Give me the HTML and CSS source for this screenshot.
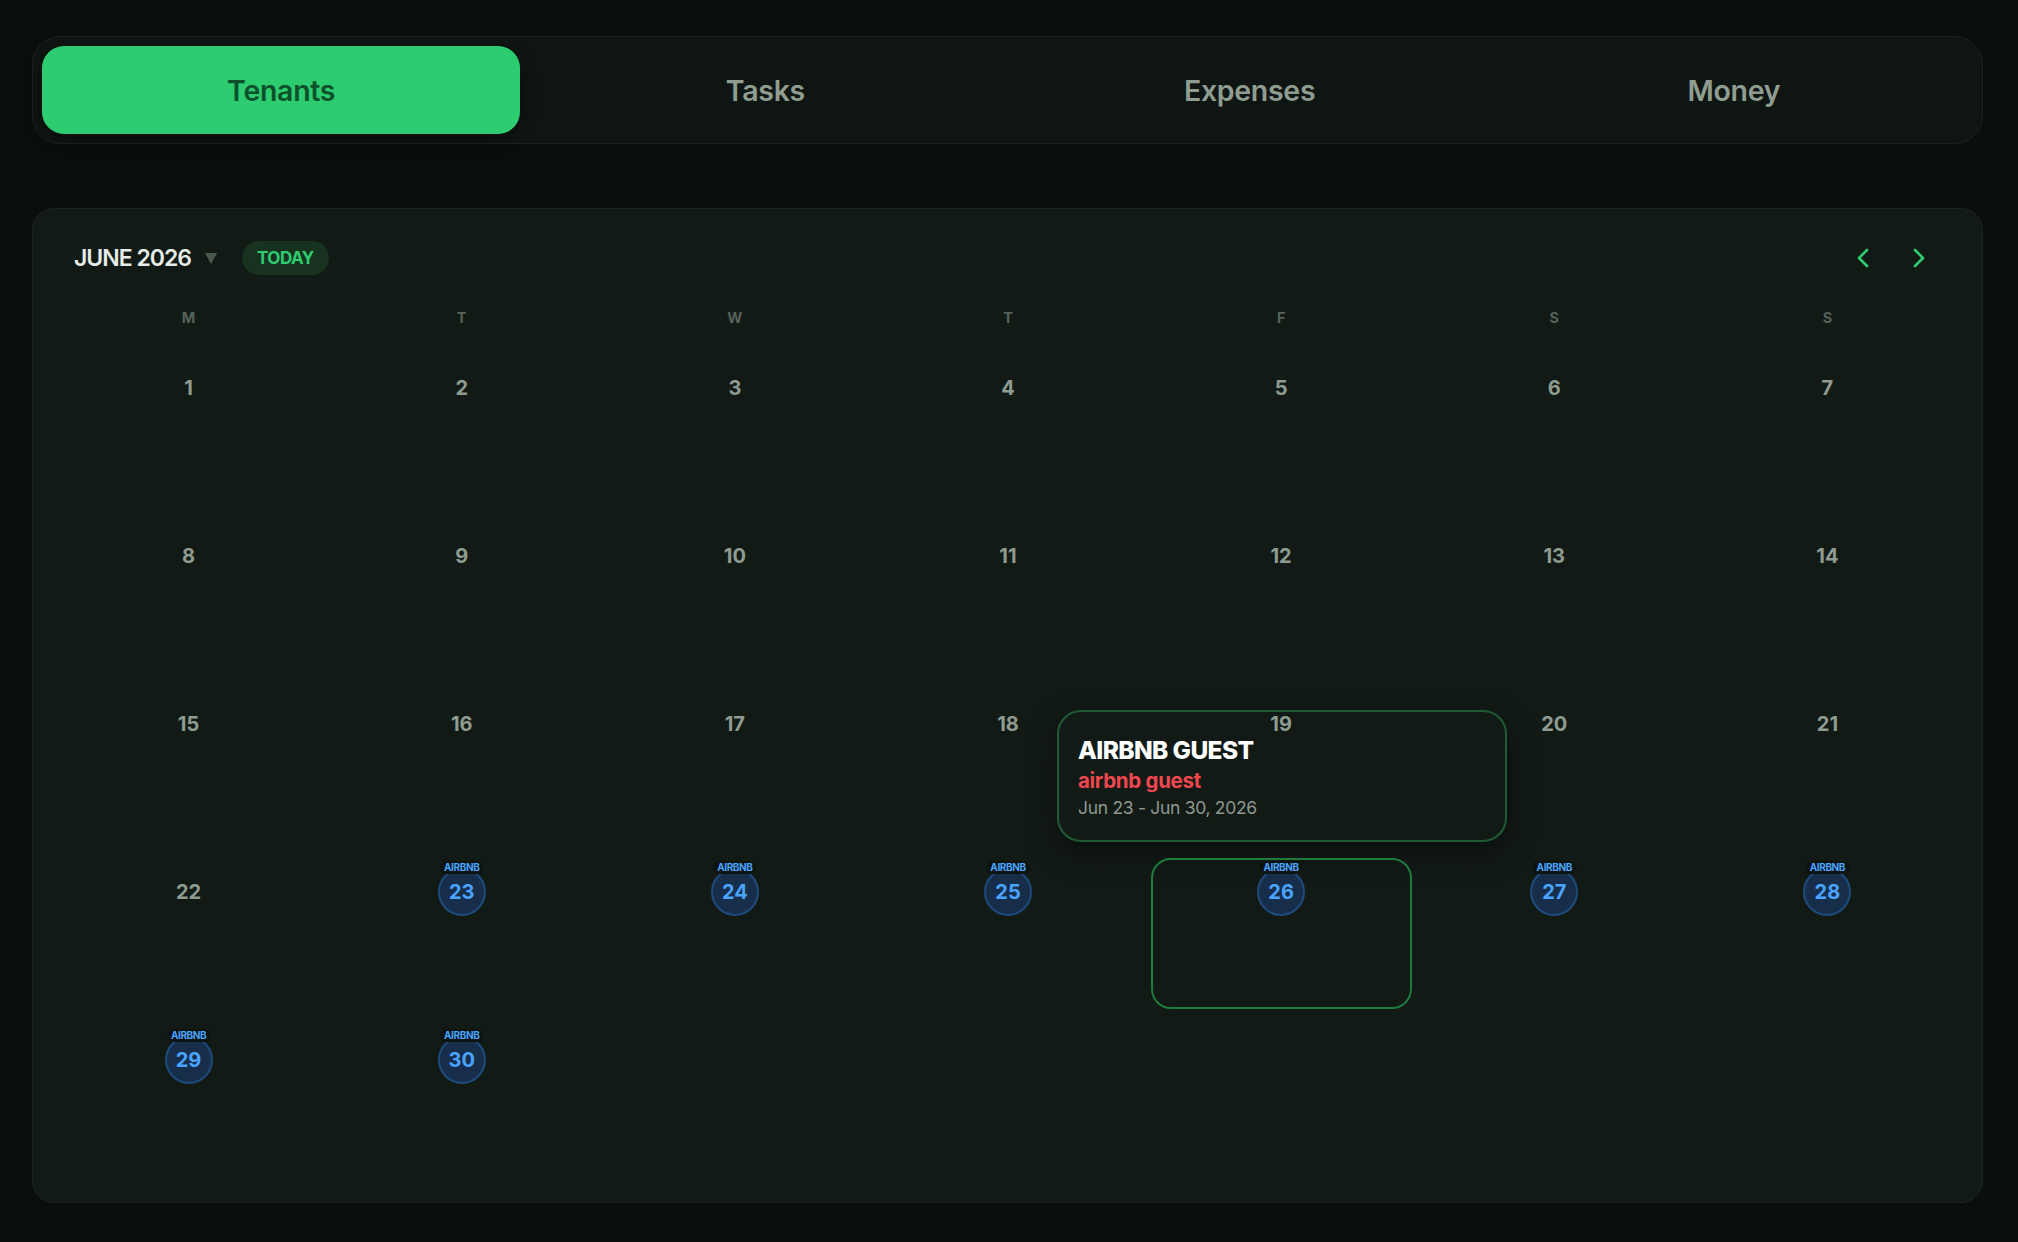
FILE: index.html
```html
<!DOCTYPE html>
<html lang="en">
<head>
  <meta charset="UTF-8" />
  <title>Rental Calendar</title>
  <link rel="stylesheet" href="styles.css">
</head>
<body>
  <nav class="tabs">
    <button class="tab active">Tenants</button>
    <button class="tab">Tasks</button>
    <button class="tab">Expenses</button>
    <button class="tab">Money</button>
  </nav>

  <section class="calendar">
    <div class="cal-head">
      <div class="month">
        <span class="month-name">JUNE 2026</span>
        <span class="caret"></span>
        <button class="today">TODAY</button>
      </div>
      <div class="nav-arrows">
        <button class="arrow">
          <svg width="14" height="22" viewBox="0 0 14 22"><path d="M11 3 L3 11 L11 19" fill="none" stroke="#2ecc71" stroke-width="2.6" stroke-linecap="round" stroke-linejoin="round"/></svg>
        </button>
        <button class="arrow">
          <svg width="14" height="22" viewBox="0 0 14 22"><path d="M3 3 L11 11 L3 19" fill="none" stroke="#2ecc71" stroke-width="2.6" stroke-linecap="round" stroke-linejoin="round"/></svg>
        </button>
      </div>
    </div>

    <div class="weekdays">
      <span>M</span><span>T</span><span>W</span><span>T</span><span>F</span><span>S</span><span>S</span>
    </div>

    <div class="days" id="days"></div>

    <div class="tooltip">
      <div class="tip-title">AIRBNB GUEST</div>
      <div class="tip-name">airbnb guest</div>
      <div class="tip-dates">Jun 23 - Jun 30, 2026</div>
    </div>
  </section>

  <script>
    const booked = [23, 24, 25, 26, 27, 28, 29, 30];
    const selected = 26;
    const days = document.getElementById("days");

    for (let d = 1; d <= 35; d++) {
      const cell = document.createElement("div");
      cell.className = "day";
      if (d === selected) cell.classList.add("selected");

      if (d <= 30) {
        const num = document.createElement("div");
        num.className = "num";
        num.textContent = d;
        if (booked.includes(d)) {
          num.classList.add("booked");
          const tag = document.createElement("span");
          tag.className = "tag";
          tag.textContent = "AIRBNB";
          num.appendChild(tag);
        }
        cell.appendChild(num);
      }
      days.appendChild(cell);
    }
  </script>
</body>
</html>
```

FILE: styles.css
```css
body {
  margin: 0;
  padding: 36px 35px 40px 32px;
  background: #0a0f0c;
  font-family: Inter, 'Noto Sans', sans-serif;
  color: #8e9b90;
}
button {
  font-family: inherit;
  border: none;
  background: none;
  cursor: pointer;
}

.tabs {
  display: grid;
  grid-template-columns: repeat(4, 1fr);
  gap: 6px;
  padding: 9px;
  background: #0f1512;
  border: 1px solid #1b221e;
  border-radius: 28px;
}
.tab {
  height: 88px;
  font-size: 28.5px;
  font-weight: 600;
  letter-spacing: -0.3px;
  color: #8f9d91;
  border-radius: 22px;
}
.tab.active {
  background: #2ecc71;
  color: #0c5129;
  box-shadow: 0 6px 18px rgba(0,0,0,0.35);
}

.calendar {
  position: relative;
  margin-top: 64px;
  padding: 32px 24px 25px 25px;
  background: #121a16;
  border: 1px solid #1c2420;
  border-radius: 22px;
}
.cal-head {
  display: flex;
  align-items: center;
  justify-content: space-between;
  padding: 0 28px 0 16px;
  height: 34px;
}
.month {
  display: flex;
  align-items: center;
}
.month-name {
  font-size: 23px;
  font-weight: 600;
  letter-spacing: -1px;
  color: #e6ece7;
}
.caret {
  width: 0;
  height: 0;
  margin-left: 14px;
  border-left: 6px solid transparent;
  border-right: 6px solid transparent;
  border-top: 11px solid #4b5a4f;
}
.today {
  margin-left: 25px;
  height: 34px;
  padding: 0 15px;
  border-radius: 17px;
  background: #17321f;
  color: #2ecc71;
  font-size: 17px;
  font-weight: 700;
  letter-spacing: -0.5px;
}
.nav-arrows {
  display: flex;
  gap: 34px;
}
.arrow {
  padding: 0;
  width: 22px;
  height: 22px;
  display: flex;
  align-items: center;
  justify-content: center;
}

.weekdays {
  display: grid;
  grid-template-columns: repeat(7, 1fr);
  column-gap: 12px;
  margin-top: 33px;
  height: 20px;
  line-height: 20px;
  text-align: center;
  font-size: 14.5px;
  font-weight: 700;
  color: #56625a;
}

.days {
  display: grid;
  grid-template-columns: repeat(7, 1fr);
  column-gap: 12px;
  row-gap: 17px;
  margin-top: 26px;
}
.day {
  position: relative;
  z-index: 2;
  height: 151px;
  box-sizing: border-box;
  border: 2px solid transparent;
  border-radius: 20px;
  display: flex;
  justify-content: center;
}
.day.selected {
  border-color: #1f7a3e;
}
.num {
  position: relative;
  margin-top: 8px;
  width: 48px;
  height: 48px;
  line-height: 48px;
  text-align: center;
  font-size: 20px;
  font-weight: 700;
  color: #8e9b90;
}
.num.booked {
  box-sizing: border-box;
  line-height: 44px;
  border: 2px solid #1e4a7c;
  border-radius: 50%;
  background: #172e4a;
  color: #4aa3ff;
}
.tag {
  position: absolute;
  left: 50%;
  top: -9px;
  transform: translateX(-50%);
  padding: 1px 4px;
  border-radius: 6px;
  background: #0d1410;
  color: #4aa3ff;
  font-size: 10px;
  line-height: 11px;
  font-weight: 700;
  letter-spacing: -0.4px;
}

.tooltip {
  position: absolute;
  z-index: 1;
  left: 1024px;
  top: 501px;
  width: 450px;
  height: 132px;
  box-sizing: border-box;
  padding: 23px 18px 0 19px;
  background: #121a16;
  border: 2px solid #1f5a34;
  border-radius: 24px;
  box-shadow: 0 10px 30px rgba(0,0,0,0.45);
}
.tip-title {
  font-size: 24.5px;
  font-weight: 800;
  letter-spacing: -0.6px;
  line-height: 30px;
  color: #ffffff;
}
.tip-name {
  margin-top: 3px;
  font-size: 20.5px;
  font-weight: 700;
  letter-spacing: -0.3px;
  line-height: 26px;
  color: #f0474f;
}
.tip-dates {
  margin-top: 3px;
  font-size: 17.5px;
  line-height: 22px;
  letter-spacing: -0.3px;
  color: #8e978f;
}
```
